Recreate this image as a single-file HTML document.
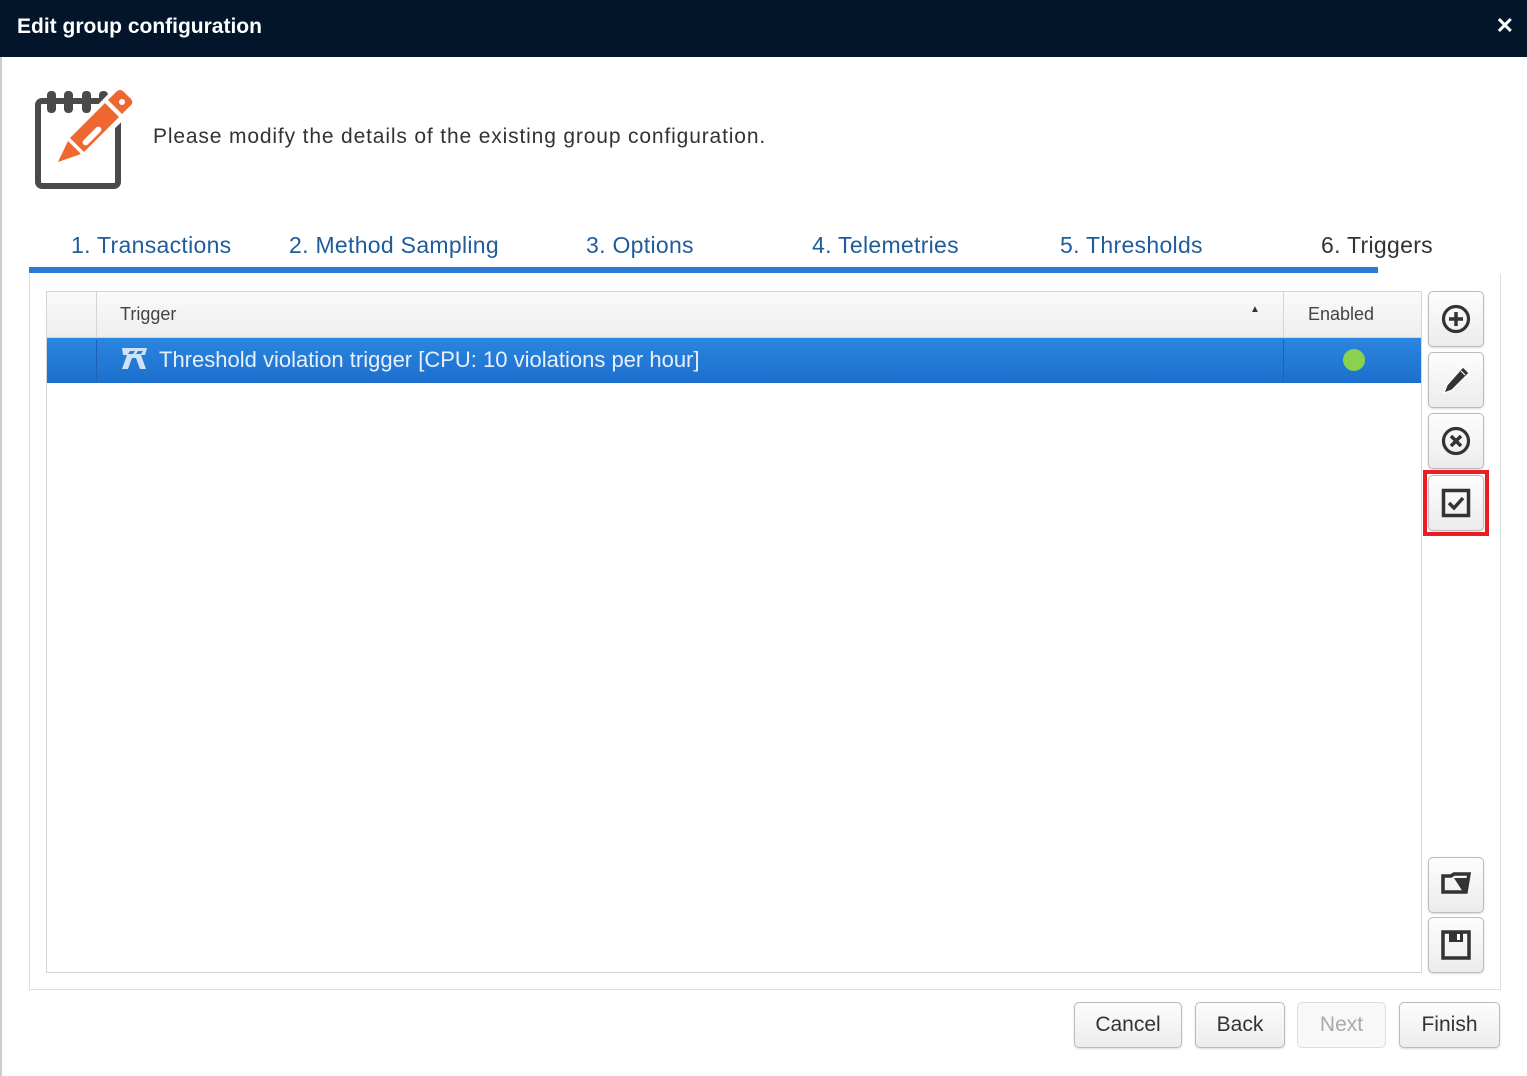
<!DOCTYPE html>
<html><head><style>
*{box-sizing:border-box;margin:0;padding:0}
body{width:1527px;height:1076px;background:#fff;font-family:"Liberation Sans",sans-serif;position:relative;overflow:hidden;color:#333}
.a{position:absolute}
.title{left:0;top:0;width:1527px;height:57px;background:#02152a;color:#fff;font-size:21px;font-weight:bold;padding:15px 17px}
.tab{top:232px;font-size:23px;color:#1f5c9c;letter-spacing:0.3px}
.btn{position:absolute;border:1px solid #bbb;border-radius:5px;background:linear-gradient(#fdfdfd,#ececec);box-shadow:0 1px 2px rgba(0,0,0,.15)}
.fb{top:1002px;height:46px;font-size:21px;text-align:center;line-height:44px;color:#333}
.ib{left:1428px;width:56px;height:56px;display:flex;align-items:center;justify-content:center}
</style></head><body>
<div class="a title">Edit group configuration<span style="position:absolute;right:13px;top:13px;font-size:22px;font-weight:bold">✕</span></div>
<div class="a" style="left:0;top:57px;width:2px;height:1019px;background:#ccc"></div>
<svg class="a" style="left:34px;top:88px" width="102" height="102" viewBox="0 0 102 102">
<rect x="4" y="13" width="80" height="85" rx="4" fill="none" stroke="#4a4a4a" stroke-width="6"/>
<rect x="13" y="3" width="9" height="22" rx="4" fill="#4a4a4a"/><rect x="30" y="3" width="9" height="22" rx="4" fill="#4a4a4a"/><rect x="48" y="3" width="9" height="22" rx="4" fill="#4a4a4a"/><rect x="65" y="3" width="9" height="22" rx="4" fill="#4a4a4a"/>
<path d="M80 0 L102 20 L50 70 L28 76 L32 50 Z" fill="#fff"/>
<path d="M82 4 Q86 0 90 4 L97 11 Q100 15 96 18 L88 26 L74 12 Z M71 15 L85 29 L50 64 L36 50 Z M34 53 L47 66 L24 74 Z" fill="#ee6630"/>
<circle cx="88" cy="14" r="3" fill="#fff"/><rect x="46" y="45" width="24" height="6" rx="3" fill="#fff" transform="rotate(-45 58 48)"/>
</svg>
<div class="a" style="left:153px;top:125px;font-size:21px;color:#333;letter-spacing:0.85px">Please modify the details of the existing group configuration.</div>
<div class="a tab" style="left:71px">1. Transactions</div>
<div class="a tab" style="left:289px">2. Method Sampling</div>
<div class="a tab" style="left:586px">3. Options</div>
<div class="a tab" style="left:812px">4. Telemetries</div>
<div class="a tab" style="left:1060px">5. Thresholds</div>
<div class="a tab" style="left:1321px;color:#333">6. Triggers</div>
<div class="a" style="left:29px;top:267px;width:1349px;height:6px;background:#2a7bd3"></div>
<div class="a" style="left:29px;top:274px;width:1472px;height:716px;border:1px solid #ddd;border-top:none"></div>
<div class="a" style="left:46px;top:291px;width:1376px;height:682px;border:1px solid #d5d5d5"></div>
<div class="a" style="left:47px;top:292px;width:1374px;height:46px;background:linear-gradient(#fafafa,#eee);border-bottom:1px solid #d5d5d5"></div>
<div class="a" style="left:96px;top:292px;width:1px;height:46px;background:#d5d5d5"></div>
<div class="a" style="left:1283px;top:292px;width:1px;height:46px;background:#d5d5d5"></div>
<div class="a" style="left:120px;top:304px;font-size:18px;color:#444">Trigger</div>
<div class="a" style="left:1250px;top:304px;font-size:10px;color:#333">▲</div>
<div class="a" style="left:1308px;top:304px;font-size:18px;color:#444">Enabled</div>
<div class="a" style="left:47px;top:338px;width:1374px;height:45px;background:linear-gradient(#2a86df,#1d6fcd)"></div>
<div class="a" style="left:96px;top:340px;width:1px;height:42px;background:#1b62b5"></div>
<div class="a" style="left:1283px;top:340px;width:1px;height:42px;background:#1b62b5"></div>
<svg class="a" style="left:119px;top:348px" width="31" height="22" viewBox="0 0 31 22"><path d="M3 0H28L26 7H22L27 21H21L17 10H13L9 21H3L8 7H4Z M11 3L9 6H14L16 3Z M19 3L17 6H22L24 3Z" fill="#cfe3f7" fill-rule="evenodd"/></svg>
<div class="a" style="left:159px;top:347px;font-size:22px;color:#e6f0fb">Threshold violation trigger [CPU: 10 violations per hour]</div>
<div class="a" style="left:1343px;top:349px;width:22px;height:22px;border-radius:50%;background:#8ad14e"></div>
<div class="btn ib" style="top:291px"><svg width="30" height="30" viewBox="0 0 30 30"><circle cx="15" cy="15" r="12.5" fill="none" stroke="#333" stroke-width="3.2"/><path d="M15 8v14M8 15h14" stroke="#333" stroke-width="3.5"/></svg></div>
<div class="btn ib" style="top:352px"><svg width="30" height="30" viewBox="0 0 30 30"><path d="M22 2L28 8L11 25L3 28L6 20Z M20 6l4 4" fill="#333" stroke="#fff" stroke-width="1.2"/></svg></div>
<div class="btn ib" style="top:413px"><svg width="30" height="30" viewBox="0 0 30 30"><circle cx="15" cy="15" r="12.5" fill="none" stroke="#333" stroke-width="3.2"/><path d="M10 10l10 10M20 10l-10 10" stroke="#333" stroke-width="3.5"/></svg></div>
<div class="a" style="left:1423px;top:470px;width:66px;height:66px;border:4px solid #ee1c24"></div>
<div class="btn ib" style="top:475px"><svg width="30" height="30" viewBox="0 0 30 30"><rect x="2.5" y="2.5" width="25" height="25" fill="none" stroke="#333" stroke-width="3.5"/><path d="M8 15l5 5 9-10" fill="none" stroke="#333" stroke-width="3.5"/></svg></div>
<div class="btn ib" style="top:857px"><svg width="30" height="30" viewBox="0 0 30 30"><path d="M2 6h8l3-2 h15 l-3 18H2Z" fill="none" stroke="#333" stroke-width="3.5"/><path d="M13 8h15l-3 14h-3Z" fill="#333"/></svg></div>
<div class="btn ib" style="top:917px"><svg width="30" height="30" viewBox="0 0 30 30"><rect x="2" y="2" width="26" height="26" fill="none" stroke="#333" stroke-width="3.5"/><rect x="8" y="2" width="14" height="10" fill="#333"/><rect x="16" y="4" width="3" height="6" fill="#fff"/></svg></div>
<div class="btn fb" style="left:1074px;width:108px">Cancel</div>
<div class="btn fb" style="left:1195px;width:90px">Back</div>
<div class="btn fb" style="left:1297px;width:89px;color:#aaa;border-color:#ddd;box-shadow:none;background:#f8f8f8">Next</div>
<div class="btn fb" style="left:1399px;width:101px">Finish</div>
</body></html>
